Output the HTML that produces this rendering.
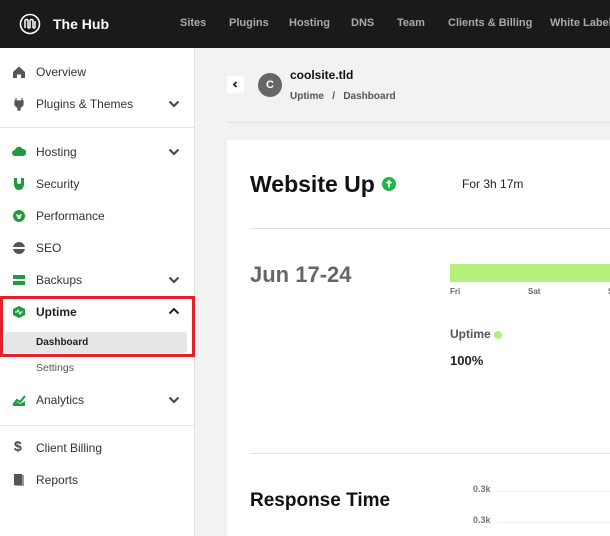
<!DOCTYPE html>
<html><head><meta charset="utf-8"><style>
*{box-sizing:border-box;margin:0;padding:0}
body{width:610px;height:536px;overflow:hidden;background:#f2f2f2;font-family:"Liberation Sans",Arial,sans-serif;position:relative}
.hdr{position:absolute;left:0;top:0;width:610px;height:48px;background:#1a1a1a}
.hdr .nav{position:absolute;top:17px;font-size:11px;font-weight:bold;color:#aaa;white-space:nowrap}
.side{position:absolute;left:0;top:48px;width:195px;height:488px;background:#fff;border-right:1px solid #e2e2e2}
.it{position:absolute;left:36px;font-size:12px;color:#333;white-space:nowrap}
.ic{position:absolute;left:12px;width:14px;height:14px}
.chev{position:absolute;left:168px;width:12px;height:8px}
.sep{position:absolute;left:0;width:195px;height:1px;background:#e6e6e6}
.card{position:absolute;left:227px;top:140px;width:383px;height:396px;background:#fff}
</style></head><body>
<div class="hdr">
<svg style="position:absolute;left:19px;top:13px" width="22" height="22" viewBox="0 0 22 22"><circle cx="11" cy="11" r="9.5" fill="none" stroke="#fff" stroke-width="1.6"/><path d="M6 15V8q0-1.5 1.5-1.5T9 8v6q0 1 1 1t1-1V8q0-1.5 1.5-1.5T14 8v6q0 1 1 1t1-1V8" fill="none" stroke="#fff" stroke-width="1.5"/></svg>
<div style="position:absolute;left:53px;top:16px;color:#fff;font-weight:bold;font-size:14px">The Hub</div>
<div class="nav" style="left:180px">Sites</div>
<div class="nav" style="left:229px">Plugins</div>
<div class="nav" style="left:289px">Hosting</div>
<div class="nav" style="left:351px">DNS</div>
<div class="nav" style="left:397px">Team</div>
<div class="nav" style="left:448px">Clients &amp; Billing</div>
<div class="nav" style="left:550px">White Label</div>
</div>
<div class="side">
<svg class="ic" style="top:17px" viewBox="0 0 14 14"><path d="M1 7L7 1.5L13 7V13H9V9.5H5V13H1Z" fill="#555"/></svg>
<div class="it" style="top:17px">Overview</div>
<svg class="ic" style="top:49px" viewBox="0 0 14 14"><path d="M4 1v3M10 1v3M3 4h8v4l-2 2H8v3H6v-3H5L3 8Z" fill="#555" stroke="#555" stroke-width="1.2"/></svg>
<div class="it" style="top:49px">Plugins &amp; Themes</div>
<svg class="chev" style="top:52px" viewBox="0 0 12 8"><path d="M1.5 1.5L6 6L10.5 1.5" fill="none" stroke="#444" stroke-width="2"/></svg>
<div class="sep" style="top:79px"></div>
<svg class="ic" style="top:97px" viewBox="0 0 14 14"><path d="M3 11a3 3 0 010-6 4 4 0 017.5-1A3.5 3.5 0 0111 11Z" fill="#1f9b3c"/></svg>
<div class="it" style="top:97px">Hosting</div>
<svg class="chev" style="top:100px" viewBox="0 0 12 8"><path d="M1.5 1.5L6 6L10.5 1.5" fill="none" stroke="#444" stroke-width="2"/></svg>
<svg class="ic" style="top:129px" viewBox="0 0 14 14"><path d="M2 1h3v5q2 2 4 0V1h3v7q-1 5-5 5T2 8Z" fill="#1f9b3c"/></svg>
<div class="it" style="top:129px">Security</div>
<svg class="ic" style="top:161px" viewBox="0 0 14 14"><circle cx="7" cy="7" r="6" fill="#1f9b3c"/><path d="M4 5l3 1 3-1-2 5h-2z" fill="#fff"/></svg>
<div class="it" style="top:161px">Performance</div>
<svg class="ic" style="top:193px" viewBox="0 0 14 14"><circle cx="7" cy="7" r="6" fill="#555"/><rect x="0" y="6" width="14" height="2" fill="#fff"/></svg>
<div class="it" style="top:193px">SEO</div>
<svg class="ic" style="top:225px" viewBox="0 0 14 14"><rect x="1" y="2" width="12" height="4" fill="#1f9b3c"/><rect x="1" y="8" width="12" height="4" fill="#1f9b3c"/></svg>
<div class="it" style="top:225px">Backups</div>
<svg class="chev" style="top:228px" viewBox="0 0 12 8"><path d="M1.5 1.5L6 6L10.5 1.5" fill="none" stroke="#444" stroke-width="2"/></svg>
<div style="position:absolute;left:0;top:248px;width:195px;height:61px;border:3px solid #e5202a"></div>
<svg class="ic" style="top:257px" viewBox="0 0 14 14"><path d="M7 1l6 3v6l-6 3-6-3V4z" fill="#1f9b3c"/><path d="M3 7h2l1-2 2 4 1-2h2" fill="none" stroke="#fff" stroke-width="1"/></svg>
<div class="it" style="top:257px;font-weight:bold;color:#222">Uptime</div>
<svg class="chev" style="top:259px" viewBox="0 0 12 8"><path d="M1.5 6.5L6 2L10.5 6.5" fill="none" stroke="#222" stroke-width="2"/></svg>
<div style="position:absolute;left:5px;top:284px;width:182px;height:21px;background:#e6e6e6;border-radius:3px"></div>
<div class="it" style="top:289px;font-size:10px;font-weight:bold;color:#222">Dashboard</div>
<div class="it" style="top:314px;font-size:10.5px;color:#555">Settings</div>
<svg class="ic" style="top:345px" viewBox="0 0 14 14"><path d="M1 12L5 7l3 2 5-6" fill="none" stroke="#1f9b3c" stroke-width="2"/><path d="M1 13h12V8L8 11 5 9 1 13z" fill="#1f9b3c"/></svg>
<div class="it" style="top:345px">Analytics</div>
<svg class="chev" style="top:348px" viewBox="0 0 12 8"><path d="M1.5 1.5L6 6L10.5 1.5" fill="none" stroke="#444" stroke-width="2"/></svg>
<div class="sep" style="top:377px"></div>
<div style="position:absolute;left:14px;top:390px;font-weight:bold;font-size:14px;color:#444">$</div>
<div class="it" style="top:393px">Client Billing</div>
<svg class="ic" style="top:425px" viewBox="0 0 14 14"><rect x="3" y="2" width="9" height="11" fill="#999"/><rect x="2" y="1" width="8" height="11" fill="#555"/></svg>
<div class="it" style="top:425px">Reports</div>
</div>
<div style="position:absolute;left:227px;top:76px;width:17px;height:17px;background:#fff;border-radius:2px"><svg width="17" height="17" viewBox="0 0 17 17"><path d="M9.5 6L7 8.5L9.5 11" fill="none" stroke="#222" stroke-width="1.8"/></svg></div>
<div style="position:absolute;left:258px;top:73px;width:24px;height:24px;border-radius:50%;background:#666;color:#fff;font-weight:bold;font-size:11px;text-align:center;line-height:24px">C</div>
<div style="position:absolute;left:290px;top:68px;font-size:12px;font-weight:bold;color:#111">coolsite.tld</div>
<div style="position:absolute;left:290px;top:91px;font-size:10px;font-weight:bold;color:#555">Uptime &nbsp; / &nbsp; Dashboard</div>
<div style="position:absolute;left:227px;top:122px;width:383px;height:1px;background:#e2e2e2"></div>
<div class="card">
<div style="position:absolute;left:23px;top:31px;font-size:23px;font-weight:bold;color:#111">Website Up</div>
<div style="position:absolute;left:155px;top:37px;width:14px;height:14px;border-radius:50%;background:#1fb44a"><svg width="14" height="14" viewBox="0 0 14 14"><path d="M7 10.5V4M4.5 6.3L7 3.8 9.5 6.3" fill="none" stroke="#fff" stroke-width="1.6"/></svg></div>
<div style="position:absolute;left:235px;top:37px;font-size:12px;color:#222">For 3h 17m</div>
<div style="position:absolute;left:23px;top:88px;width:360px;height:1px;background:#e2e2e2"></div>
<div style="position:absolute;left:23px;top:122px;font-size:22px;font-weight:bold;color:#666">Jun 17-24</div>
<div style="position:absolute;left:223px;top:124px;width:160px;height:18px;background:#b4ef7b"></div>
<div style="position:absolute;left:223px;top:147px;font-size:8px;font-weight:bold;color:#666">Fri</div>
<div style="position:absolute;left:301px;top:147px;font-size:8px;font-weight:bold;color:#666">Sat</div>
<div style="position:absolute;left:381px;top:147px;font-size:8px;font-weight:bold;color:#666">S</div>
<div style="position:absolute;left:223px;top:187px;font-size:12px;font-weight:bold;color:#555">Uptime</div>
<div style="position:absolute;left:267px;top:191px;width:8px;height:8px;border-radius:50%;background:#b4ef7b"></div>
<div style="position:absolute;left:223px;top:213px;font-size:13px;font-weight:bold;color:#222">100%</div>
<div style="position:absolute;left:23px;top:313px;width:360px;height:1px;background:#e2e2e2"></div>
<div style="position:absolute;left:23px;top:350px;font-size:19px;font-weight:bold;color:#111">Response Time</div>
<div style="position:absolute;left:246px;top:344px;font-size:9px;font-weight:bold;color:#777">0.3k</div>
<div style="position:absolute;left:270px;top:351px;width:113px;height:1px;background:#eee"></div>
<div style="position:absolute;left:246px;top:375px;font-size:9px;font-weight:bold;color:#777">0.3k</div>
<div style="position:absolute;left:270px;top:382px;width:113px;height:1px;background:#eee"></div>
</div>
</body></html>
